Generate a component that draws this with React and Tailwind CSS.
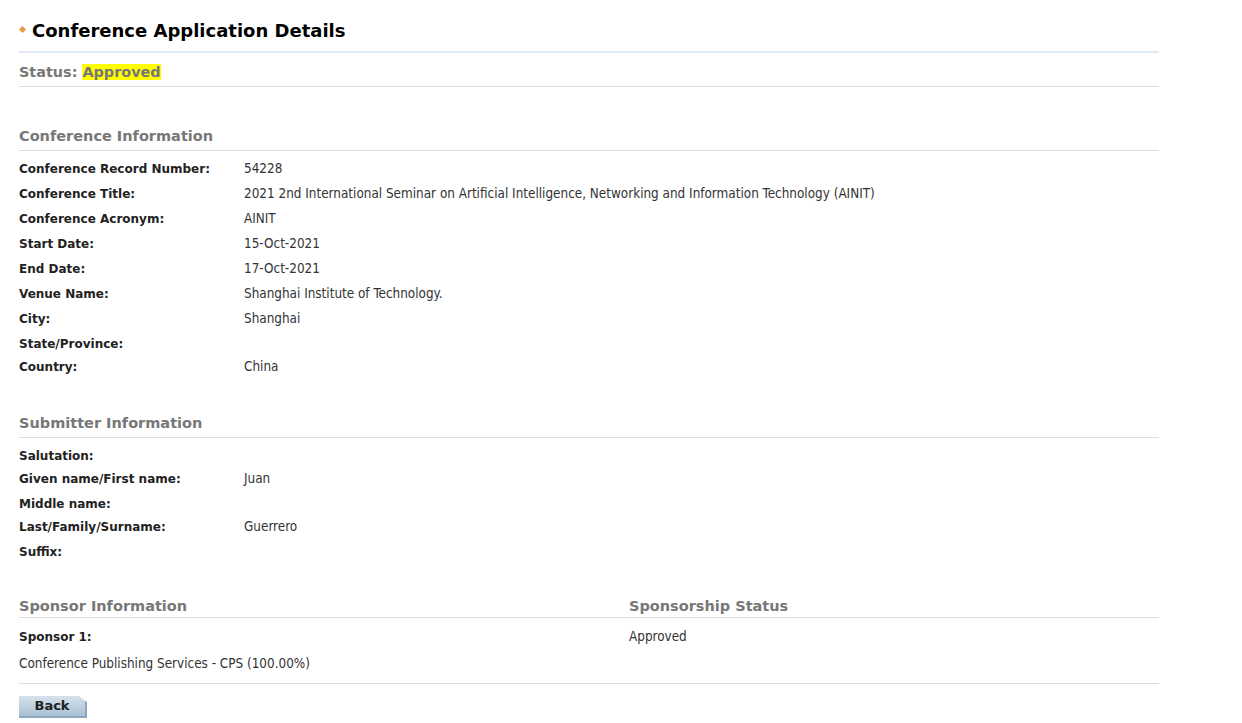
const conference = [
  ['Conference Record Number:', '54228'],
  ['Conference Title:', '2021 2nd International Seminar on Artificial Intelligence, Networking and Information Technology (AINIT)'],
  ['Conference Acronym:', 'AINIT'],
  ['Start Date:', '15-Oct-2021'],
  ['End Date:', '17-Oct-2021'],
  ['Venue Name:', 'Shanghai Institute of Technology.'],
  ['City:', 'Shanghai'],
  ['State/Province:', ''],
  ['Country:', 'China'],
];

const submitter = [
  ['Salutation:', ''],
  ['Given name/First name:', 'Juan'],
  ['Middle name:', ''],
  ['Last/Family/Surname:', 'Guerrero'],
  ['Suffix:', ''],
];

const verdana = { fontFamily: '"DejaVu Sans", Verdana, sans-serif' };
const tahoma = { fontFamily: '"DejaVu Sans Condensed", "DejaVu Sans", Tahoma, sans-serif' };

function SectionHeading({ children, className = 'pb-[5px]' }) {
  return (
    <div className={`border-b border-[#dcdcdc] text-[14.5px] leading-[18px] font-bold text-[#777] ${className}`}>
      {children}
    </div>
  );
}

// empty rows sit 2px tighter than filled ones
function Row({ label, value }) {
  return (
    <div className={`flex items-start pt-[3px] ${value ? 'h-[25px]' : 'h-[23px]'}`}>
      <div className="w-[225px] shrink-0 text-[12px] leading-[18px] font-bold text-[#222]">{label}</div>
      <div className="text-[13.4px] leading-[18px] text-[#333]" style={tahoma}>{value}</div>
    </div>
  );
}

export default function App() {
  return (
    <div className="min-h-screen bg-white" style={verdana}>
      <div className="w-[1140px] ml-[19px] pt-[19px]">
        <div className="flex items-center border-b-2 border-[#e1eaf3] pb-[8px]">
          <span className="mr-[7px] -mt-[4px] ml-[1px] inline-block h-[5px] w-[5px] rotate-45 bg-[#e99a43]" />
          <h1 className="text-[18px] leading-[24px] font-bold text-black">Conference Application Details</h1>
        </div>

        <div className="border-b border-[#dcdcdc] pt-[11px] pb-[6px] text-[14.4px] leading-[16px] font-bold text-[#777]">
          Status: <span className="bg-[#ffff00]">Approved</span>
        </div>

        <div className="mt-[40px]">
          <SectionHeading>Conference Information</SectionHeading>
          <div className="pt-[6px]">
            {conference.map(([l, v]) => (
              <Row key={l} label={l} value={v} />
            ))}
          </div>
        </div>

        <div className="mt-[34px]">
          <SectionHeading>Submitter Information</SectionHeading>
          <div className="pt-[6px]">
            {submitter.map(([l, v]) => (
              <Row key={l} label={l} value={v} />
            ))}
          </div>
        </div>

        <div className="mt-[34px]">
          <SectionHeading className="flex pb-[2px]">
            <div className="w-[610px]">Sponsor Information</div>
            <div>Sponsorship Status</div>
          </SectionHeading>
          <div className="border-b border-[#dcdcdc] pt-[10px] pb-[10px]">
            <div className="flex h-[27px]">
              <div className="w-[610px] text-[12px] leading-[18px] font-bold text-[#222]">Sponsor 1:</div>
              <div className="text-[13.4px] leading-[18px] text-[#333]" style={tahoma}>Approved</div>
            </div>
            <div className="text-[13.4px] leading-[18px] text-[#333]" style={tahoma}>
              Conference Publishing Services - CPS (100.00%)
            </div>
          </div>
        </div>

        <button className="mt-[12px] h-[22px] w-[68px] border-b-2 border-r-2 border-[#8ea6bd] bg-gradient-to-b from-[#d6e2ed] to-[#a9bfd3] text-[13px] font-bold text-[#222] [clip-path:polygon(0_0,88%_0,100%_28%,100%_100%,0_100%)]">
          Back
        </button>
      </div>
    </div>
  );
}
